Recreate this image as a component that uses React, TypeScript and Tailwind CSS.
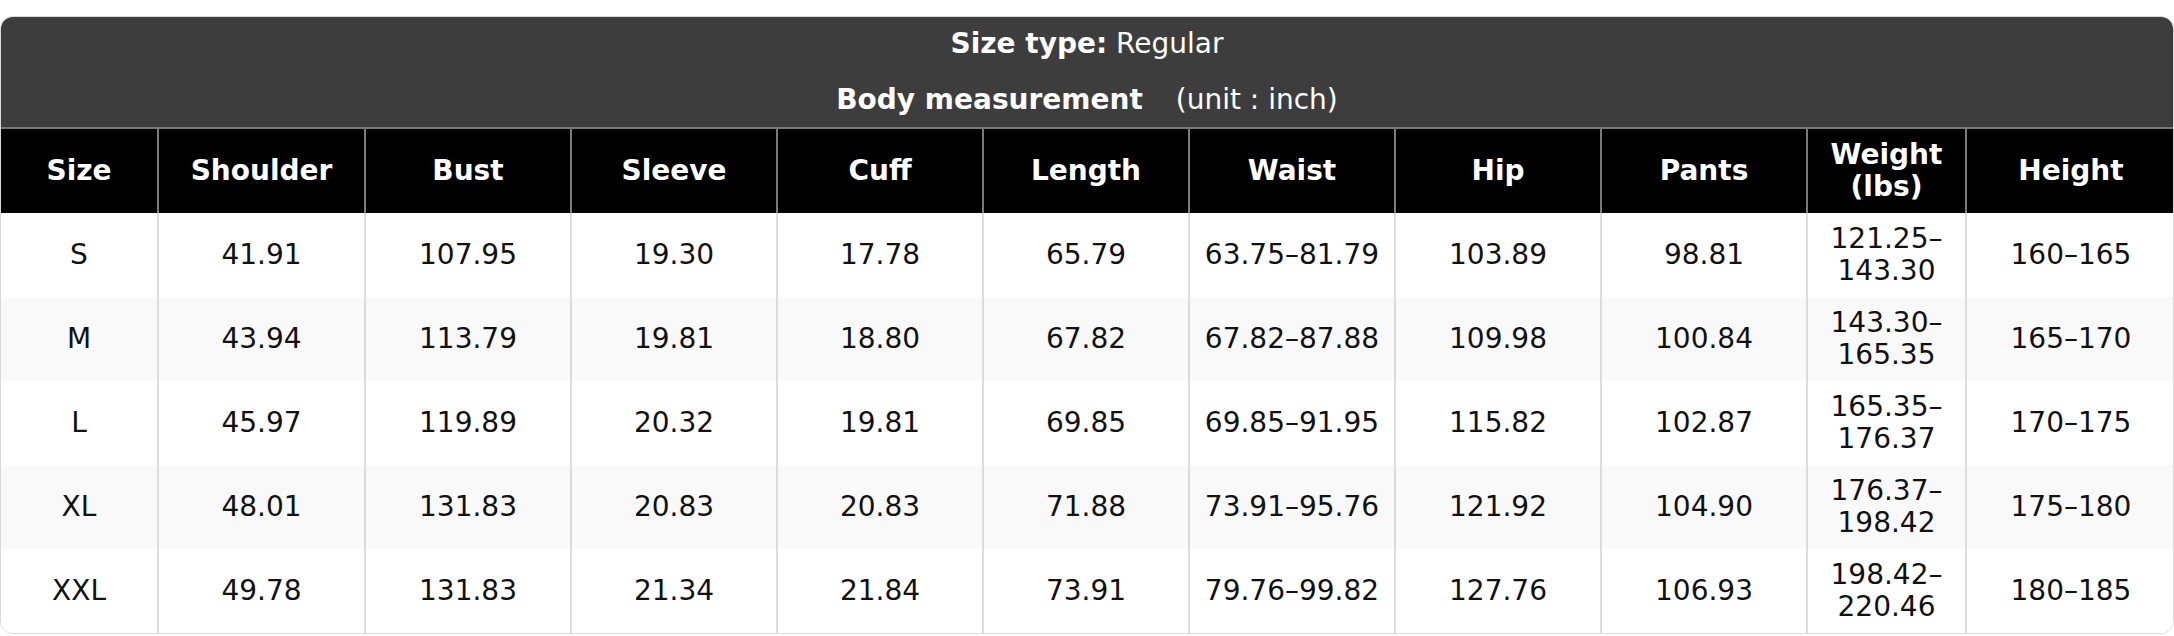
import React from "react";

const cols = ["Size", "Shoulder", "Bust", "Sleeve", "Cuff", "Length", "Waist", "Hip", "Pants", "Weight (lbs)", "Height"];
const widths = [157, 207, 206, 206, 206, 206, 206, 206, 206, 159, 209];

const rows: string[][] = [
  ["S", "41.91", "107.95", "19.30", "17.78", "65.79", "63.75–81.79", "103.89", "98.81", "121.25–143.30", "160–165"],
  ["M", "43.94", "113.79", "19.81", "18.80", "67.82", "67.82–87.88", "109.98", "100.84", "143.30–165.35", "165–170"],
  ["L", "45.97", "119.89", "20.32", "19.81", "69.85", "69.85–91.95", "115.82", "102.87", "165.35–176.37", "170–175"],
  ["XL", "48.01", "131.83", "20.83", "20.83", "71.88", "73.91–95.76", "121.92", "104.90", "176.37–198.42", "175–180"],
  ["XXL", "49.78", "131.83", "21.34", "21.84", "73.91", "79.76–99.82", "127.76", "106.93", "198.42–220.46", "180–185"],
];

export default function App() {
  return (
    <div className="w-[2174px] pt-[16px] bg-white" style={{ fontFamily: '"DejaVu Sans", Verdana, sans-serif' }}>
      <div className="w-full rounded-[13px] border border-[#d9d9d9] overflow-hidden">
        <div className="h-[112px] bg-[#3d3d3d] text-white text-[28px] flex flex-col items-center border-b-2 border-[#7a7a7a]">
          <div className="mt-[11px] h-[32px] leading-[32px]">
            <span className="font-bold">Size type:</span> Regular
          </div>
          <div className="mt-[24px] h-[32px] leading-[32px]">
            <span className="font-bold">Body measurement</span>
            <span className="ml-[24px]"> (unit : inch)</span>
          </div>
        </div>
        <table className="w-full table-fixed border-collapse">
          <colgroup>
            {widths.map((w, i) => (
              <col key={i} style={{ width: w }} />
            ))}
          </colgroup>
          <thead>
            <tr className="h-[84px] bg-black">
              {cols.map((c, i) => (
                <th
                  key={c}
                  className={`p-0 text-white font-bold text-[28px] leading-[32px] text-center align-middle ${i > 0 ? "border-l-2 border-[#7a7a7a]" : ""}`}
                >
                  {c === "Weight (lbs)" ? (
                    <>
                      Weight
                      <br />
                      (lbs)
                    </>
                  ) : (
                    c
                  )}
                </th>
              ))}
            </tr>
          </thead>
          <tbody>
            {rows.map((r, ri) => (
              <tr key={ri} className={`h-[84px] ${ri % 2 === 1 ? "bg-[#f9f9f9]" : "bg-white"}`}>
                {r.map((v, i) => (
                  <td
                    key={i}
                    className={`p-0 text-[#111] text-[28px] leading-[32px] text-center align-middle ${i > 0 ? "border-l-2 border-[#dcdcdc]" : ""}`}
                  >
                    {i === 9 ? (
                      <>
                        {v.split("–")[0]}–
                        <br />
                        {v.split("–")[1]}
                      </>
                    ) : (
                      v
                    )}
                  </td>
                ))}
              </tr>
            ))}
          </tbody>
        </table>
      </div>
    </div>
  );
}
